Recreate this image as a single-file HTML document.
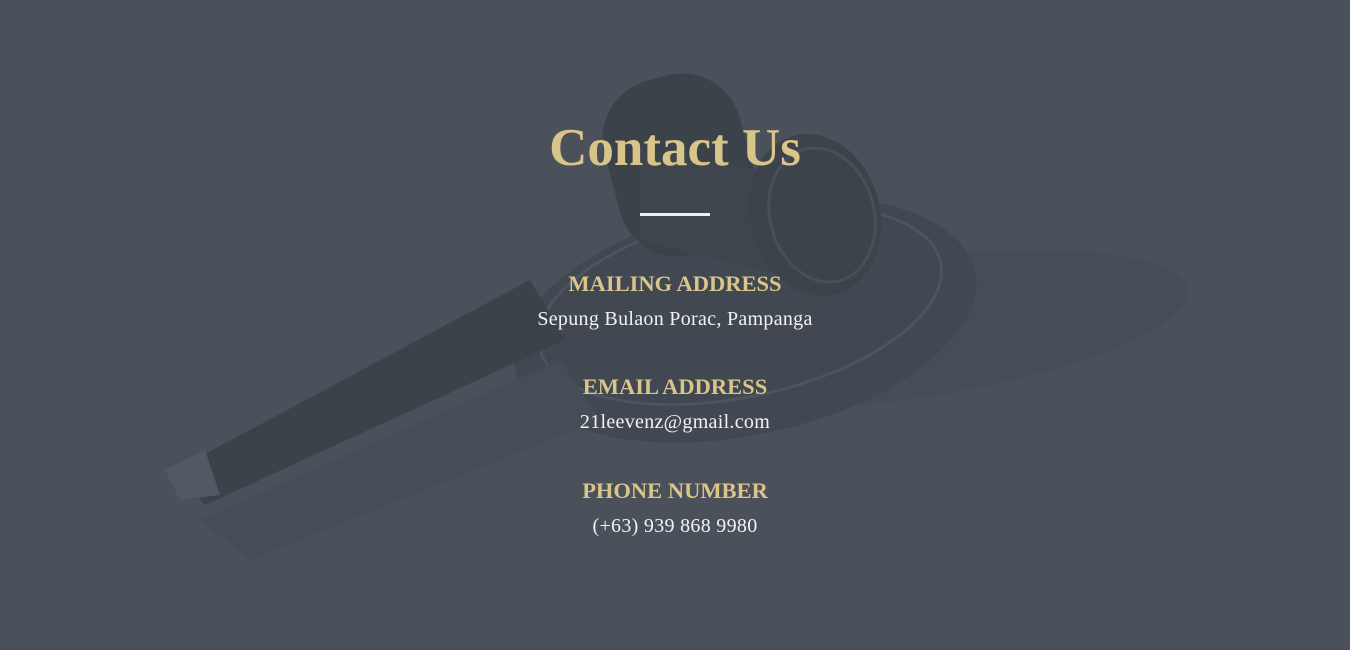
<!DOCTYPE html>
<html><head><style>
html,body{margin:0;padding:0;}
body{width:1350px;height:650px;background:#4a515b;position:relative;overflow:hidden;font-family:"Liberation Serif",serif;}
svg{position:absolute;left:0;top:0;}
.c{position:absolute;left:0;width:1350px;text-align:center;}
h1{margin:0;font-size:53px;font-weight:bold;color:#d9c48a;}
.h{font-size:22.5px;font-weight:bold;color:#d9c48a;}
.t{font-size:20px;color:#f2f2f2;letter-spacing:0.3px;}
.line{position:absolute;left:640px;top:213px;width:70px;height:3px;background:#f0f0f0;}
</style></head><body>
<svg width="1350" height="650">
<ellipse cx="900" cy="330" rx="290" ry="70" fill="#464d57" transform="rotate(-8 900 330)"/>
<ellipse cx="745" cy="320" rx="235" ry="115" fill="#424851" transform="rotate(-12 745 320)"/>
<ellipse cx="740" cy="305" rx="205" ry="92" fill="none" stroke="#4d545d" stroke-width="3" transform="rotate(-12 740 305)"/>
<path d="M200 520 L560 360 L600 420 L250 560 Z" fill="#464d56"/>
<path d="M175 470 L530 280 L565 340 L205 505 Z" fill="#3c424a"/>
<path d="M165 470 L205 450 L220 495 L180 500 Z" fill="#525962"/>
<rect x="610" y="75" width="140" height="180" rx="60" fill="#3c424a" transform="rotate(-15 680 165)"/>
<path d="M640 150 L820 180 L800 280 L640 240 Z" fill="#3f454d"/>
<ellipse cx="815" cy="215" rx="65" ry="82" fill="#3d434b" transform="rotate(-15 815 215)"/>
<ellipse cx="822" cy="215" rx="52" ry="68" fill="none" stroke="#484f58" stroke-width="3" transform="rotate(-15 822 215)"/>
</svg>
<div class="c" style="top:118px"><h1>Contact Us</h1></div>
<div class="line"></div>
<div class="c h" style="top:271px">MAILING ADDRESS</div>
<div class="c t" style="top:308px">Sepung Bulaon Porac, Pampanga</div>
<div class="c h" style="top:374px">EMAIL ADDRESS</div>
<div class="c t" style="top:411px">21leevenz@gmail.com</div>
<div class="c h" style="top:478px">PHONE NUMBER</div>
<div class="c t" style="top:515px">(+63) 939 868 9980</div>
</body></html>
